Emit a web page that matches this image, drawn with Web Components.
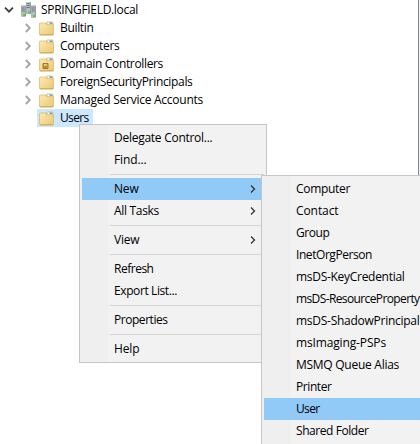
<!DOCTYPE html>
<html lang="en"><head><meta charset="utf-8"><title>Directory console</title>
<style>
html,body{margin:0;width:420px;height:444px;overflow:hidden;background:#fff}
body{font:12px "Open Sans","Noto Sans",sans-serif;color:#000}
</style></head><body>
<ad-console></ad-console>
<script>
// Text run whose tracking is adjusted to a given advance width.
class FitText extends HTMLElement{
  connectedCallback(){
    const r=this.attachShadow({mode:'open'});
    r.innerHTML='<style>:host{display:inline-block;white-space:pre}span{display:inline-block}</style><span></span>';
    const s=r.querySelector('span');s.textContent=this.getAttribute('text');
    const w=+this.getAttribute('width');
    const n=s.getBoundingClientRect().width;
    if(w&&n)s.style.letterSpacing=((w-n)/s.textContent.length)+'px';
  }
}
customElements.define('fit-text',FitText);

class AdIcon extends HTMLElement{
  connectedCallback(){
    const k=this.getAttribute('kind');
    const folder=`<defs><linearGradient id="g" x1="0" y1="0" x2="1" y2="1"><stop offset="0" stop-color="#fdeab2"/><stop offset="1" stop-color="#eac874"/></linearGradient></defs>
      <path d="M7.5 5V2q0-1 1-1h4.500q1 0 1 1V6H7.500z" fill="#e6cf8c" stroke="#cbab5c" stroke-width=".7"/><path d="M8.500 1.500h4.500v2H8.500z" fill="#fff"/><path d="M10.500 1.500h2.500v1.400h-2.500z" fill="#4b9fe0"/>
      <path d="M.5 2.800q0-.8.8-.8h5.300l1.200 1.700h5.900q.8 0 .8.800v8.900q0 .6-.6.6H1.100q-.6 0-.6-.6z" fill="url(#g)" stroke="#d6b665" stroke-width=".7"/><path d="M1 13.800h13" stroke="#c5a04a" stroke-width=".8"/>`;
    const dc=k==='dc'?'<path d="M4 6.500h5v5H4z" fill="#cfa548" stroke="#9b7827"/><path d="M5 7.300h3v1.200H5z" fill="#f0d894"/><path d="M5.500 9.500h2v1h-2z" fill="#80601c"/>':'';
    const tower=(x,y,h)=>`<path d="M${x} ${y}h4.500v${h}h-4.500z" fill="#7d878c"/><path d="M${x} ${y}h3.700v${h}h-3.700z" fill="#b4bdc1"/><path d="M${x+.3} ${y+1.500}h3.200M${x+.3} ${y+3.500}h3.200M${x+.3} ${y+5.500}h3.200" stroke="#667177" stroke-width=".9"/><path d="M${x+.3} ${y+.5}h3.200" stroke="#e1e6e8" stroke-width=".7"/><path d="M${x+2} ${y+h-2.500}h2v2h-2z" fill="#36d91b"/>`;
    const svg={
      open:['14','14','<path d="M3 4.700l4 4 4-4" fill="none" stroke="#404040" stroke-width="1.900"/>'],
      closed:['14','14','<path d="M4.800 3l4 4-4 4" fill="none" stroke="#a5a5a5" stroke-width="1.800"/>'],
      sub:['8','10','<path d="M2 1.500L5.500 5 2 8.500" fill="none" stroke="#333" stroke-width="1.300"/>'],
      folder:['15','15',folder],dc:['15','15',folder+dc],
      domain:['16','16',tower(5.300,0,12)+tower(.3,3.500,11)+tower(10.300,3.500,12)]
    }[k];
    this.attachShadow({mode:'open'}).innerHTML=`<style>:host{display:block;flex:none;width:${svg[0]}px;height:${svg[1]}px}svg{display:block}</style><svg width="${svg[0]}" height="${svg[1]}" viewBox="0 0 ${svg[0]} ${svg[1]}">${svg[2]}</svg>`;
  }
}
customElements.define('ad-icon',AdIcon);

class TreeNode extends HTMLElement{
  connectedCallback(){
    const a=n=>this.getAttribute(n), root=this.hasAttribute('root'), leaf=this.hasAttribute('selected');
    this.attachShadow({mode:'open'}).innerHTML=`<style>
      :host{display:flex;align-items:center;height:18px;line-height:18px;padding-left:${root?2:21}px}
      .arrow{width:14px;margin-right:${root?5:2}px}
      .label{display:flex;align-items:center;height:18px;gap:${root?4:6}px;padding:0 4px 0 ${root?0:2}px;${leaf?'background:#cce8ff':''}}
      </style><div class="arrow">${leaf?'':`<ad-icon kind="${root?'open':'closed'}"></ad-icon>`}</div>
      <div class="label"><ad-icon kind="${a('icon')||'folder'}"></ad-icon><fit-text text="${a('text')}" width="${a('width')}"></fit-text></div>`;
  }
}
customElements.define('tree-node',TreeNode);

class MenuItem extends HTMLElement{
  connectedCallback(){
    const a=n=>this.getAttribute(n);
    this.attachShadow({mode:'open'}).innerHTML=`<style>
      :host{display:flex;align-items:center;justify-content:space-between;height:22px;line-height:22px;padding:0 7px 0 32px;box-sizing:border-box}
      :host([active]){background:#91c9f7}
      </style><fit-text text="${a('text')}" width="${a('width')}"></fit-text>${this.hasAttribute('sub')?'<ad-icon kind="sub"></ad-icon>':''}`;
  }
}
customElements.define('menu-item',MenuItem);

class MenuRule extends HTMLElement{
  connectedCallback(){this.attachShadow({mode:'open'}).innerHTML='<style>:host{display:block;height:1px;margin:3px 0 3px 28px;background:#d4d4d4}</style>'}
}
customElements.define('menu-rule',MenuRule);

class PopupMenu extends HTMLElement{
  connectedCallback(){this.attachShadow({mode:'open'}).innerHTML='<style>:host{display:block;box-sizing:border-box;background:linear-gradient(90deg,#efefef 28px,#f2f2f2 28px);border:1px solid #c6c6c6;padding:2px}</style><slot></slot>'}
}
customElements.define('popup-menu',PopupMenu);

class AdConsole extends HTMLElement{
  connectedCallback(){
    const item=(t,w,x='')=>`<menu-item text="${t}" width="${w}" ${x}></menu-item>`, hr='<menu-rule></menu-rule>';
    this.attachShadow({mode:'open'}).innerHTML=`<style>
      :host{display:block;position:relative;width:420px;height:444px;overflow:hidden;background:#fff}
      .tree{padding-top:1px}
      .edge{position:absolute;left:418px;top:0;width:1px;height:176px;background:#828790;border-right:1px solid #f0f0f0}
      .context{position:absolute;left:79px;top:124px;width:188px;height:239px}
      .new{position:absolute;left:261px;top:175px;width:210px;height:300px}
      </style>
      <div class="tree">
      <tree-node root icon="domain" text="SPRINGFIELD.local" width="97"></tree-node>
      <tree-node text="Builtin" width="33.500"></tree-node>
      <tree-node text="Computers" width="59.500"></tree-node>
      <tree-node icon="dc" text="Domain Controllers" width="103"></tree-node>
      <tree-node text="ForeignSecurityPrincipals" width="132.500"></tree-node>
      <tree-node text="Managed Service Accounts" width="143"></tree-node>
      <tree-node selected text="Users" width="28.500"></tree-node></div>
      <div class="edge"></div>
      <popup-menu class="context">${item('Delegate Control...',98.5)}${item('Find...',32.5)}${hr}${item('New',24.5,'active sub')}${item('All Tasks',45,'sub')}${hr}${item('View',25.5,'sub')}${hr}${item('Refresh',39.5)}${item('Export List...',63)}${hr}${item('Properties',53.5)}${hr}${item('Help',25.5)}</popup-menu>
      <popup-menu class="new">${item('Computer',54)}${item('Contact',42.5)}${item('Group',33.5)}${item('InetOrgPerson',76)}${item('msDS-KeyCredential',108.5)}${item('msDS-ResourceProperty',123.5)}${item('msDS-ShadowPrincipal',123.5)}${item('msImaging-PSPs',90)}${item('MSMQ Queue Alias',103)}${item('Printer',35.5)}${item('User',23.5,'active')}${item('Shared Folder',72.5)}</popup-menu>`;
  }
}
customElements.define('ad-console',AdConsole);
</script></body></html>
